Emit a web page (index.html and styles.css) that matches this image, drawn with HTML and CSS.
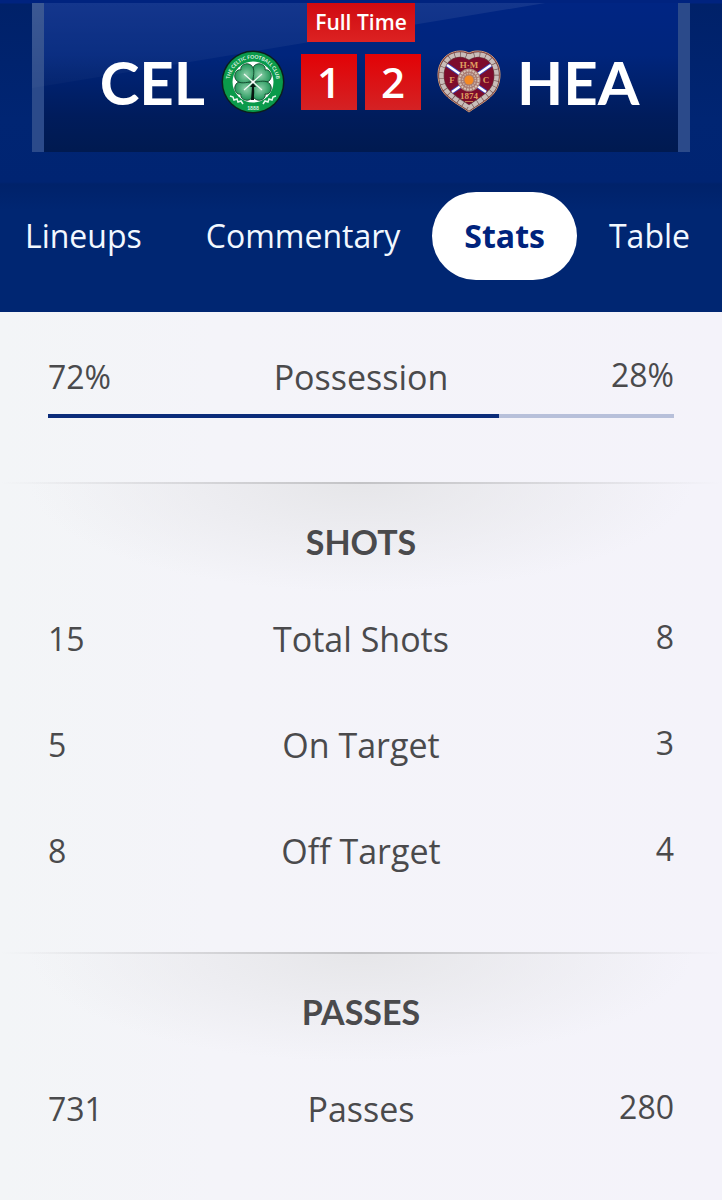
FILE: index.html
```html
<!DOCTYPE html>
<html lang="en">
<head>
    <meta charset="UTF-8">
    <meta name="viewport" content="width=device-width, initial-scale=1.0">
    <title>Celtic 1 - 2 Hearts | Stats</title>
    <link rel="stylesheet" href="styles.css">
</head>
<body>
    <header class="match-header">
        <div class="scoreboard">
            <div class="status">Full Time</div>
            <div class="score-line">
                <div class="team home">
                    <span class="team-name">CEL</span>
                    <svg class="crest" viewBox="0 0 64 64" role="img" aria-label="Celtic">
                        <defs>
                            <path id="ring-top" d="M9 37 A23.500 23.500 0 1 1 55 37"/>
                            <radialGradient id="leaf-fill">
                                <stop offset="0" stop-color="#8fcfab"/>
                                <stop offset="1" stop-color="#2a9c60"/>
                            </radialGradient>
                            <path id="leaf" d="M32 31 C27 28 20.500 24 21.500 18.500 C22.500 12.500 30 11 32 15 C34 11 41.500 12.500 42.500 18.500 C43.500 24 37 28 32 31Z"/>
                        </defs>
                        <circle cx="32" cy="32" r="31.5" fill="#0b1f1c"/>
                        <circle cx="32" cy="32" r="30" fill="#0a9a4a"/>
                        <circle cx="32" cy="32" r="20.5" fill="#fff"/>
                        <g fill="url(#leaf-fill)" stroke="#0b3d25" stroke-width="0.8">
                            <use href="#leaf" transform="rotate(45 32 32)"/>
                            <use href="#leaf" transform="rotate(135 32 32)"/>
                            <use href="#leaf" transform="rotate(225 32 32)"/>
                            <use href="#leaf" transform="rotate(315 32 32)"/>
                        </g>
                        <path d="M23 24 L41 40 M41 24 L23 40" stroke="#f2faf4" stroke-width="1.200"/>
                        <path d="M32 33 L29 37 L31 37 L30 50 L33 50 L33 37 L35 37Z" fill="#071510"/>
                        <circle cx="32" cy="32" r="1.6" fill="#fff"/>
                        <path d="M9 46 l3 1 l1 3 l3 -1 l1 3 l3 -1 l2 3 M55 46 l-3 1 l-1 3 l-3 -1 l-1 3 l-3 -1 l-2 3" fill="none" stroke="#e6f7ec" stroke-width="1.5"/>
                        <text class="ring-text"><textPath href="#ring-top" startOffset="50%">THE CELTIC FOOTBALL CLUB</textPath></text>
                        <text class="ring-text" x="32" y="60">1888</text>
                    </svg>
                </div>
                <div class="score">
                    <span class="goals">1</span>
                    <span class="goals">2</span>
                </div>
                <div class="team away">
                    <svg class="crest" viewBox="0 0 64 64" role="img" aria-label="Hearts">
                        <path d="M32 3 C39 -1 50 1 56 7 C63 14 65 25 61 36 C57 48 43 54 32 62 C21 54 7 48 3 36 C-1 25 1 14 8 7 C14 1 25 -1 32 3Z" fill="#9a3032" stroke="#c99a78" stroke-width="1"/>
                        <path d="M32 7 C39 3 48 4 53.500 9.500 C60 16 61 26 58 35 C54 45 42 51 32 58 C22 51 10 45 6 35 C3 26 4 16 10.500 9.500 C16 4 25 3 32 7Z" fill="#7d0c2c" stroke="#6b4a48" stroke-width="5.500"/>
                        <path d="M32 7 C39 3 48 4 53.500 9.500 C60 16 61 26 58 35 C54 45 42 51 32 58 C22 51 10 45 6 35 C3 26 4 16 10.500 9.500 C16 4 25 3 32 7Z" fill="none" stroke="#c9bdb9" stroke-width="4.500" stroke-dasharray="5.200 0.600"/>
                        <path d="M10 15 L49 42 M54 15 L15 42" stroke="#3b3fb0" stroke-width="4.500"/>
                        <path d="M10 15 L49 42 M54 15 L15 42" stroke="#fff" stroke-width="2.500"/>
                        <circle cx="32" cy="30" r="11.500" fill="#a87b72"/>
                        <circle cx="32" cy="30" r="9.500" fill="none" stroke="#d8c4b8" stroke-width="2" stroke-dasharray="2 1"/>
                        <circle cx="32" cy="30" r="6.500" fill="none" stroke="#c9b2a8" stroke-width="1.500" stroke-dasharray="1.500 1"/>
                        <circle cx="32" cy="30" r="4.500" fill="#f58a24"/>
                        <g class="heart-text">
                            <text x="32" y="17.500">H·M</text>
                            <text x="15" y="33">F</text>
                            <text x="49" y="33">C</text>
                            <text x="32" y="49">1874</text>
                        </g>
                        <path d="M28 51.500 H36" stroke="#d99a5e" stroke-width="0.800"/>
                    </svg>
                    <span class="team-name">HEA</span>
                </div>
            </div>
        </div>
        <nav class="tabs">
            <a href="#lineups">Lineups</a>
            <a href="#commentary">Commentary</a>
            <a href="#stats" class="active" aria-current="page">Stats</a>
            <a href="#table">Table</a>
        </nav>
    </header>

    <main class="stats" id="stats">
        <section class="possession">
            <table>
                <tr><td>72%</td><th scope="row">Possession</th><td>28%</td></tr>
            </table>
            <div class="bar"><div class="bar-fill" style="width: 72%"></div></div>
        </section>

        <section class="stat-group">
            <h2>SHOTS</h2>
            <table>
                <tr><td>15</td><th scope="row">Total Shots</th><td>8</td></tr>
                <tr><td>5</td><th scope="row">On Target</th><td>3</td></tr>
                <tr><td>8</td><th scope="row">Off Target</th><td>4</td></tr>
            </table>
        </section>

        <section class="stat-group">
            <h2>PASSES</h2>
            <table>
                <tr><td>731</td><th scope="row">Passes</th><td>280</td></tr>
            </table>
        </section>
    </main>
</body>
</html>
```
FILE: styles.css
```css
* {
    box-sizing: border-box;
}
body {
    margin: 0;
    min-height: 100vh;
    overflow-x: hidden;
    font-family: "Open Sans", "Noto Sans", sans-serif;
    color: #4a4a4c;
    background: linear-gradient(to right, #f3f5f7, #f4f4f9 30%, #f4f3fa);
}

/* header */
.match-header {
    padding-top: 3px;
    background: linear-gradient(#00237f 3px, #002169 4px, #002573 120px, #002472 182px, #00226a 184px, #002672 210px);
}
.scoreboard {
    position: relative;
    display: flex;
    flex-direction: column;
    align-items: center;
    gap: 8px;
    height: 149px;
    margin: 0 32px;
    border: solid #2b4a8a;
    border-width: 0 12px;
    background: linear-gradient(#002583, #00257c 35%, #001c5c 75%, #001a50);
}
/* diagonal shine */
.scoreboard::before {
    content: "";
    position: absolute;
    top: 0;
    left: -12px;
    right: -12px;
    height: 85px;
    background: linear-gradient(rgba(255, 255, 255, 0.08), rgba(255, 255, 255, 0.02));
    clip-path: polygon(0 0, 78% 0, 0 100%);
}
.status {
    position: relative;
    padding: 0 8px;
    font-size: 21px;
    font-weight: 600;
    line-height: 39px;
    color: #fff;
    background: linear-gradient(#d00a10, #dc2222);
}
.score-line {
    position: relative;
    display: grid;
    grid-template-columns: 1fr auto 1fr;
    align-items: center;
    gap: 16px;
    width: 100%;
}
.team {
    display: flex;
    align-items: center;
    gap: 16px;
}
.home {
    justify-content: flex-end;
}
.team-name {
    font-family: Lato, sans-serif;
    font-size: 60px;
    font-weight: 700;
    line-height: 56px;
    color: #fff;
}
.crest {
    flex: none;
    width: 64px;
    height: 64px;
}
.ring-text {
    font-family: Lato, sans-serif;
    font-size: 5px;
    font-weight: 700;
    text-anchor: middle;
    fill: #e2f5e8;
}
.heart-text {
    font-family: "Liberation Serif", serif;
    font-size: 9px;
    font-weight: 700;
    text-anchor: middle;
    fill: #e0a060;
}
.score {
    display: flex;
    gap: 8px;
}
.goals {
    width: 56px;
    font-size: 42px;
    font-weight: 600;
    line-height: 56px;
    text-align: center;
    color: #fff;
    background: linear-gradient(#e20206, #d42224);
}

/* last tabs stay in view, the first ones run off the left edge */
.tabs {
    display: flex;
    justify-content: flex-end;
    padding: 40px 0 32px;
}
.tabs a {
    padding: 0 32px;
    border-radius: 44px;
    font-size: 32px;
    line-height: 88px;
    color: #f2f8ff;
    text-decoration: none;
}
.tabs .active {
    font-weight: 700;
    color: #00237c;
    background: #fff;
}

/* stats */
table {
    width: 100%;
    table-layout: fixed;
    border-collapse: collapse;
}
td,
th {
    height: 106px;
    padding: 0;
    font-size: 34px;
    font-weight: 400;
    line-height: 48px;
    text-align: center;
}
td {
    font-size: 32px;
}
td:first-child {
    text-align: left;
}
td:last-child {
    padding-bottom: 4px;
    text-align: right;
}
.possession {
    padding: 12px 48px 64px;
}
.bar {
    height: 4px;
    margin-top: -16px;
    background: #b7c0da;
}
.bar-fill {
    height: 100%;
    background: #0b2c7a;
}
.stat-group {
    padding: 0 48px 48px;
    background:
        linear-gradient(to right, transparent, #c3c3c6 50%, transparent) top / 100% 2px no-repeat,
        radial-gradient(ellipse 46% 110px at 50% 0, #e6e6e9, rgba(230, 230, 233, 0)) no-repeat;
}
h2 {
    margin: 0;
    padding: 40px 0 24px;
    font-family: Lato, sans-serif;
    font-size: 34px;
    font-weight: 700;
    line-height: 40px;
    text-align: center;
}
```
